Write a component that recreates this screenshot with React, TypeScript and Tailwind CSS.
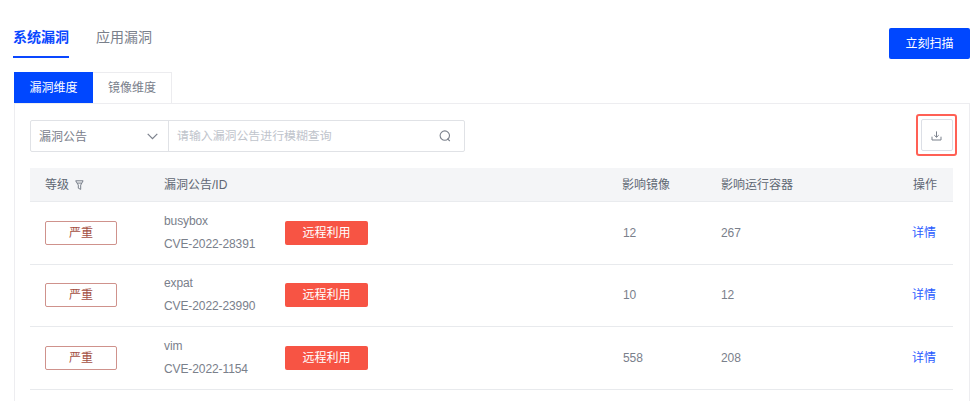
const rows = [
  { name: 'busybox', id: 'CVE-2022-28391', images: 12, containers: 267 },
  { name: 'expat', id: 'CVE-2022-23990', images: 10, containers: 12 },
  { name: 'vim', id: 'CVE-2022-1154', images: 558, containers: 208 },
];

const columns = 'grid grid-cols-[134px_121px_338px_99px_1fr] items-center pr-4';

function ChevronIcon() {
  return (
    <svg className="h-[7px] w-[11px]" viewBox="0 0 11 7" fill="none" stroke="#7b818c" strokeWidth="1.2">
      <path d="M0.7 0.8 5.5 5.7 10.3 0.8" />
    </svg>
  );
}

function SearchIcon() {
  return (
    <svg className="size-3" viewBox="0 0 12 12" fill="none" stroke="#7b818c" strokeWidth="1.1">
      <circle cx="5.8" cy="5.6" r="4.7" />
      <path d="M8.3 8.7 10.8 11" />
    </svg>
  );
}

function FilterIcon() {
  return (
    <svg className="h-2.5 w-[9px]" viewBox="0 0 9 10" fill="none" stroke="#777e89" strokeWidth="1" strokeLinejoin="round">
      <path d="M0.7 0.8H8.1L5.7 5.1V9.4L3.3 8.2V5.1ZM2.3 3.1H6.5" />
    </svg>
  );
}

function DownloadIcon() {
  return (
    <svg className="mt-px h-2.5 w-[11px]" viewBox="0 0 11 10" fill="none" stroke="#7b818c" strokeWidth="1">
      <path d="M5.5 0.4V6M3.3 4.2 5.5 6.3 7.7 4.2M1 5.7V9H10V5.7" />
    </svg>
  );
}

export default function App() {
  return (
    <div className="flex h-[401px] w-[977px] flex-col overflow-hidden bg-white pr-[7px] pl-[13px] font-['Liberation_Sans','Noto_Sans_CJK_SC',sans-serif] text-[12px] text-[#7a808b]">
      <header className="flex h-[72px] justify-between pt-7">
        <nav className="flex gap-[27px] text-[14px] leading-[18px]">
          <span className="h-[30px] border-b-2 border-[#0a47ff] font-bold text-[#0a47ff]">系统漏洞</span>
          <span>应用漏洞</span>
        </nav>
        <button className="h-[31px] w-[81px] rounded-[2px] bg-[#0047ff] pt-px text-white">立刻扫描</button>
      </header>

      <div className="ml-px flex h-[31px] shrink-0">
        <div className="flex w-[79px] items-center justify-center bg-[#0047ff] text-white">漏洞维度</div>
        <div className="flex w-[79px] items-center justify-center border-t border-r border-[#ececef]">镜像维度</div>
      </div>

      <main className="ml-px h-[298px] w-[956px] border-t border-r border-l border-[#ededf0] pl-[15px]">
        <div className="flex h-[64px] items-start justify-between pt-2.5 pr-3">
          <div className="mt-1.5 flex h-8 w-[435px] rounded-[2px] border border-[#e0e2e6]">
            <div className="flex w-[138px] items-center justify-between border-r border-[#e0e2e6] pt-px pr-2.5 pl-2">
              漏洞公告
              <ChevronIcon />
            </div>
            <div className="flex flex-1 items-center justify-between pr-[13px] pl-2 text-[#c0c4cc]">
              <span className="pt-px text-[11.9px]">请输入漏洞公告进行模糊查询</span>
              <SearchIcon />
            </div>
          </div>
          <div className="flex h-[42px] w-[41px] items-center justify-center rounded-[3px] border-2 border-[#ff6055]">
            <button className="flex h-8 w-8 shrink-0 items-center justify-center rounded-[2px] border border-[#dcdfe6]">
              <DownloadIcon />
            </button>
          </div>
        </div>

        <div className="w-[923px]">
          <div className={`${columns} h-[34.4px] border-b border-[#e9ebee] bg-[#f4f5f7] text-[#606773]`}>
            <div className="flex items-center gap-1.5 pl-[15px]">
              等级
              <FilterIcon />
            </div>
            <div className="pt-px">漏洞公告/ID</div>
            <div />
            <div className="-ml-px pt-px">影响镜像</div>
            <div className="-ml-px flex justify-between pt-px">
              <span>影响运行容器</span>
              <span>操作</span>
            </div>
          </div>
          {rows.map((row) => (
            <div key={row.id} className={`${columns} h-[62.4px] border-b border-[#e8eaed]`}>
              <div className="pl-[15px]">
                <div className="flex h-6 w-[72px] items-center justify-center rounded-[2px] border border-[#cf928c] text-[#a34f43]">
                  严重
                </div>
              </div>
              <div className="leading-[23px] tracking-[-0.1px]">
                <div>{row.name}</div>
                <div>{row.id}</div>
              </div>
              <div>
                <span className="flex h-6 w-[83px] items-center justify-center rounded-[2px] bg-[#f75444] text-white">
                  远程利用
                </span>
              </div>
              <div className="tracking-[-0.1px]">{row.images}</div>
              <div className="-ml-px flex items-center justify-between">
                <span className="tracking-[-0.1px]">{row.containers}</span>
                <span className="pr-px text-[#2b5cff]">详情</span>
              </div>
            </div>
          ))}
        </div>
      </main>
    </div>
  );
}
